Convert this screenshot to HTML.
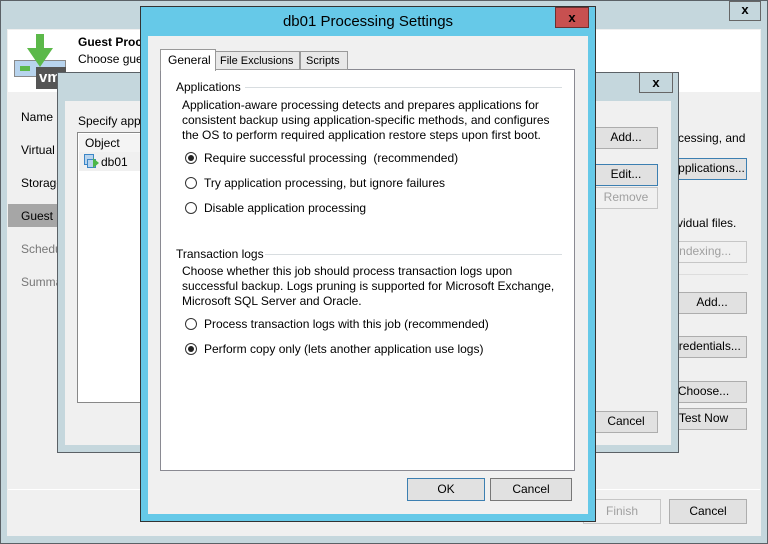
<!DOCTYPE html>
<html><head><meta charset="utf-8"><style>
*{box-sizing:border-box;margin:0;padding:0}
body{width:768px;height:544px;position:relative;overflow:hidden;font-family:"Liberation Sans",sans-serif;font-size:12px;color:#000;background:#c5d7dd}
.a{position:absolute}
.t{position:absolute;white-space:nowrap;line-height:15px}
.btn{position:absolute;background:#e1e1e1;border:1px solid #adadad;text-align:center;line-height:19px;font-size:12px;white-space:nowrap;overflow:hidden}
.dis{background:#f0f0f0;border-color:#c6c6c6;color:#a0a0a0}
.foc{border-color:#3c7fb1}
.x{position:absolute;border:1px solid #666;background:#c5d7dd;font-weight:bold;text-align:center;line-height:16px;font-size:13px}
.r{position:absolute;width:12px;height:12px;border:1px solid #333;border-radius:50%;background:#fff}
.r.on::after{content:"";position:absolute;left:2px;top:2px;width:6px;height:6px;border-radius:50%;background:#222}
</style></head><body>
<!-- outer window -->
<div class="a" style="left:0;top:0;width:768px;height:544px;border:1px solid #5b6166"></div>
<div class="x" style="left:729px;top:1px;width:32px;height:20px">x</div>
<div class="a" style="left:7px;top:29px;width:754px;height:507px;background:#f0f0f0"></div>
<div class="a" style="left:8px;top:30px;width:752px;height:62px;background:#fff"></div>
<!-- logo -->
<div class="a" style="left:14px;top:60px;width:52px;height:17px;background:#b8d4ee;border:1px solid #8a8a8a"></div>
<div class="a" style="left:20px;top:66px;width:10px;height:5px;background:#5cb94a"></div>
<div class="a" style="left:36px;top:67px;width:30px;height:22px;background:#555;color:#fff;font-weight:bold;font-size:15px;line-height:22px;padding-left:3px">vm</div>
<svg class="a" style="left:25px;top:34px" width="30" height="34"><path d="M11 0h8v14h9L15 33 2 14h9z" fill="#5cb94a"/></svg>
<div class="t" style="left:78px;top:35px;font-weight:bold">Guest Processing</div>
<div class="t" style="left:78px;top:52px">Choose guest OS processing options</div>
<div class="t" style="left:21px;top:110px">Name</div>
<div class="t" style="left:21px;top:143px">Virtual Machines</div>
<div class="t" style="left:21px;top:176px">Storage</div>
<div class="a" style="left:8px;top:204px;width:150px;height:23px;background:#a6a6a6"></div>
<div class="t" style="left:21px;top:209px">Guest Processing</div>
<div class="t" style="left:21px;top:242px;color:#777">Schedule</div>
<div class="t" style="left:21px;top:275px;color:#777">Summary</div>
<div class="a" style="left:8px;top:489px;width:752px;height:1px;background:#fff"></div>
<div class="btn dis" style="left:583px;top:499px;width:78px;height:25px;line-height:23px">Finish</div>
<div class="btn" style="left:669px;top:499px;width:78px;height:25px;line-height:23px">Cancel</div>
<div class="t" style="left:678px;top:131px">cessing, and</div>
<div class="btn foc" style="left:656px;top:158px;width:91px;height:22px;padding-left:12px">Applications...</div>
<div class="t" style="left:677px;top:216px">vidual files.</div>
<div class="btn dis" style="left:650px;top:241px;width:97px;height:22px;padding-left:10px">Indexing...</div>
<div class="a" style="left:660px;top:274px;width:88px;height:1px;background:#ddd"></div>
<div class="btn" style="left:677px;top:292px;width:70px;height:22px">Add...</div>
<div class="btn" style="left:650px;top:336px;width:97px;height:22px;padding-left:14px">Credentials...</div>
<div class="btn" style="left:650px;top:381px;width:97px;height:22px;padding-left:10px">Choose...</div>
<div class="btn" style="left:650px;top:408px;width:97px;height:22px;padding-left:10px">Test Now</div>
<!-- middle dialog -->
<div class="a" style="left:57px;top:72px;width:622px;height:381px;background:#c5d7dd;border:1px solid #5b6166"></div>
<div class="x" style="left:639px;top:72px;width:34px;height:21px;line-height:19px">x</div>
<div class="a" style="left:65px;top:101px;width:606px;height:344px;background:#f0f0f0"></div>
<div class="t" style="left:78px;top:114px">Specify application processing settings</div>
<div class="a" style="left:77px;top:132px;width:200px;height:271px;background:#fff;border:1px solid #888"></div>
<div class="a" style="left:79px;top:134px;width:196px;height:18px;background:#f4f4f4"></div>
<div class="t" style="left:85px;top:136px">Object</div>
<div class="a" style="left:79px;top:152px;width:196px;height:19px;background:#f0f0f0"></div>
<div class="a" style="left:84px;top:154px;width:10px;height:11px;border:1px solid #3c86c6;background:#b8d4ee"></div>
<div class="a" style="left:87px;top:159px;width:9px;height:9px;border:1px solid #3c86c6;background:#b8d4ee"></div>
<svg class="a" style="left:93px;top:158px" width="6" height="10"><path d="M0 0l6 5-6 5z" fill="#4cb848"/></svg>
<div class="t" style="left:101px;top:155px">db01</div>
<div class="btn" style="left:594px;top:127px;width:64px;height:22px">Add...</div>
<div class="btn foc" style="left:594px;top:164px;width:64px;height:22px">Edit...</div>
<div class="btn dis" style="left:594px;top:187px;width:64px;height:22px">Remove</div>
<div class="btn" style="left:594px;top:411px;width:64px;height:22px">Cancel</div>
<!-- front dialog -->
<div class="a" style="left:140px;top:6px;width:456px;height:516px;background:#66c9e8;border:1px solid #333"></div>
<div class="t" style="left:140px;top:13px;width:456px;text-align:center;font-size:15px;line-height:18px">db01 Processing Settings</div>
<div class="a" style="left:555px;top:7px;width:34px;height:21px;background:#c75050;border:1px solid #6b3030;text-align:center;font-weight:bold;font-size:13px;line-height:19px">x</div>
<div class="a" style="left:148px;top:36px;width:440px;height:478px;background:#f0f0f0"></div>
<div class="a" style="left:160px;top:69px;width:415px;height:402px;background:#fff;border:1px solid #8a8a92"></div>
<div class="a" style="left:215px;top:51px;width:85px;height:19px;background:#e8e8e8;border:1px solid #999"></div>
<div class="a" style="left:300px;top:51px;width:48px;height:19px;background:#e8e8e8;border:1px solid #999"></div>
<div class="a" style="left:160px;top:49px;width:56px;height:22px;background:#fff;border:1px solid #999;border-bottom:none"></div>
<div class="t" style="left:168px;top:53px">General</div>
<div class="t" style="left:220px;top:54px;font-size:11px">File Exclusions</div>
<div class="t" style="left:306px;top:54px;font-size:11px">Scripts</div>
<div class="t" style="left:176px;top:80px">Applications</div>
<div class="a" style="left:245px;top:87px;width:317px;height:1px;background:#d8dde0"></div>
<div class="t" style="left:182px;top:98px">Application-aware processing detects and prepares applications for</div>
<div class="t" style="left:182px;top:113px">consistent backup using application-specific methods, and configures</div>
<div class="t" style="left:182px;top:128px">the OS to perform required application restore steps upon first boot.</div>
<div class="r on" style="left:185px;top:152px"></div><div class="t" style="left:204px;top:151px">Require successful processing &nbsp;(recommended)</div>
<div class="r" style="left:185px;top:177px"></div><div class="t" style="left:204px;top:176px">Try application processing, but ignore failures</div>
<div class="r" style="left:185px;top:202px"></div><div class="t" style="left:204px;top:201px">Disable application processing</div>
<div class="t" style="left:176px;top:247px">Transaction logs</div>
<div class="a" style="left:265px;top:254px;width:297px;height:1px;background:#d8dde0"></div>
<div class="t" style="left:182px;top:264px">Choose whether this job should process transaction logs upon</div>
<div class="t" style="left:182px;top:279px">successful backup. Logs pruning is supported for Microsoft Exchange,</div>
<div class="t" style="left:182px;top:294px">Microsoft SQL Server and Oracle.</div>
<div class="r" style="left:185px;top:318px"></div><div class="t" style="left:204px;top:317px">Process transaction logs with this job (recommended)</div>
<div class="r on" style="left:185px;top:343px"></div><div class="t" style="left:204px;top:342px">Perform copy only (lets another application use logs)</div>
<div class="btn foc" style="left:407px;top:478px;width:78px;height:23px;line-height:21px">OK</div>
<div class="btn" style="left:490px;top:478px;width:82px;height:23px;line-height:21px;border-color:#777">Cancel</div>
</body></html>
